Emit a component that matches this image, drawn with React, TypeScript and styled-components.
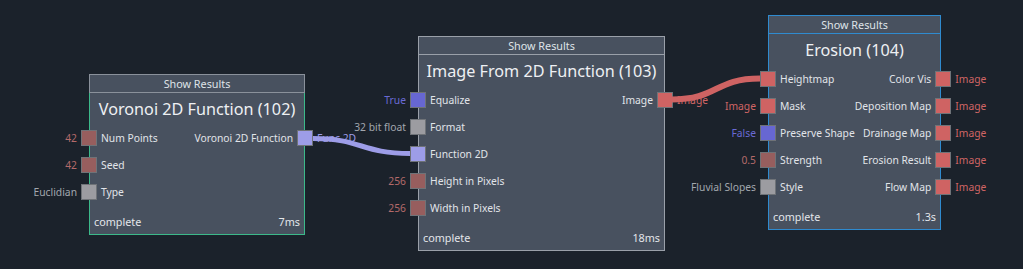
import React from 'react'
import styled, { createGlobalStyle } from 'styled-components'

type PortType = 'number' | 'enum' | 'bool' | 'func' | 'image'

const portColors: Record<PortType, string> = {
  number: '#975e5e',
  enum: '#9c9ca1',
  bool: '#6767d2',
  func: '#9d9de8',
  image: '#cf6363',
}

const valueColors: Record<PortType, string> = {
  number: '#b46a6a',
  enum: '#a2a7ae',
  bool: '#6a6ad4',
  func: '#9d9de8',
  image: '#d06565',
}

type Port = { label: string; type: PortType; value?: string }

type NodeData = {
  title: string
  x: number
  y: number
  w: number
  border: string
  headerBorder: string
  time: string
  inputs: Port[]
  outputs: Port[]
}

const nodes: NodeData[] = [
  {
    title: 'Voronoi 2D Function (102)',
    x: 89,
    y: 74,
    w: 216,
    border: '#3cb98a',
    headerBorder: '#8a919b',
    time: '7ms',
    inputs: [
      { label: 'Num Points', type: 'number', value: '42' },
      { label: 'Seed', type: 'number', value: '42' },
      { label: 'Type', type: 'enum', value: 'Euclidian' },
    ],
    outputs: [{ label: 'Voronoi 2D Function', type: 'func', value: 'Func 2D' }],
  },
  {
    title: 'Image From 2D Function (103)',
    x: 418,
    y: 36,
    w: 247,
    border: '#9aa0a9',
    headerBorder: '#9aa0a9',
    time: '18ms',
    inputs: [
      { label: 'Equalize', type: 'bool', value: 'True' },
      { label: 'Format', type: 'enum', value: '32 bit float' },
      { label: 'Function 2D', type: 'func' },
      { label: 'Height in Pixels', type: 'number', value: '256' },
      { label: 'Width in Pixels', type: 'number', value: '256' },
    ],
    outputs: [{ label: 'Image', type: 'image', value: 'Image' }],
  },
  {
    title: 'Erosion (104)',
    x: 768,
    y: 15,
    w: 173,
    border: '#2f8bd0',
    headerBorder: '#2f8bd0',
    time: '1.3s',
    inputs: [
      { label: 'Heightmap', type: 'image' },
      { label: 'Mask', type: 'image', value: 'Image' },
      { label: 'Preserve Shape', type: 'bool', value: 'False' },
      { label: 'Strength', type: 'number', value: '0.5' },
      { label: 'Style', type: 'enum', value: 'Fluvial Slopes' },
    ],
    outputs: [
      { label: 'Color Vis', type: 'image', value: 'Image' },
      { label: 'Deposition Map', type: 'image', value: 'Image' },
      { label: 'Drainage Map', type: 'image', value: 'Image' },
      { label: 'Erosion Result', type: 'image', value: 'Image' },
      { label: 'Flow Map', type: 'image', value: 'Image' },
    ],
  },
]

const wires = [
  { d: 'M313 138.5 C362 138.5 361 153.5 410 153.5', color: portColors.func, width: 5 },
  { d: 'M672 99.5 C718 99.5 714 78.5 760 78.5', color: portColors.image, width: 6 },
]

const GlobalStyle = createGlobalStyle`
  html, body {
    margin: 0;
    padding: 0;
    background: #1b222b;
  }
  body {
    font-family: 'Noto Sans', 'Open Sans', sans-serif;
    color: #e1e5ea;
  }
`

const Canvas = styled.div`
  position: relative;
  width: 1023px;
  height: 269px;
  overflow: hidden;
  background: #1b222b;
`

const NodeBox = styled.div<{ $x: number; $y: number; $w: number }>`
  position: absolute;
  left: ${(p) => p.$x}px;
  top: ${(p) => p.$y}px;
  width: ${(p) => p.$w}px;
  display: flex;
  flex-direction: column;
`

const Header = styled.div<{ $border: string }>`
  height: 17px;
  line-height: 17px;
  border: 1px solid ${(p) => p.$border};
  background: #48515f;
  text-align: center;
  font-size: 10.8px;
  color: #dfe3e8;
`

const Body = styled.div<{ $border: string }>`
  border: 1px solid ${(p) => p.$border};
  border-top: none;
  background: #48515f;
  padding: 4px 0 4px;
  display: flex;
  flex-direction: column;
`

const Title = styled.div`
  height: 24px;
  line-height: 24px;
  text-align: center;
  font-size: 16.2px;
  color: #eef0f3;
  white-space: nowrap;
  margin-bottom: 3px;
`

const Rows = styled.div`
  display: flex;
  justify-content: space-between;
  margin: 0 -9px;
`

const Column = styled.div<{ $right?: boolean }>`
  display: flex;
  flex-direction: column;
  align-items: ${(p) => (p.$right ? 'flex-end' : 'flex-start')};
`

const Row = styled.div<{ $right?: boolean }>`
  height: 27px;
  display: flex;
  align-items: center;
  gap: 4px;
  flex-direction: ${(p) => (p.$right ? 'row-reverse' : 'row')};
  font-size: 10.3px;
  color: #e1e4e9;
  white-space: nowrap;
`

const PortWrap = styled.div`
  position: relative;
  width: 16px;
  height: 16px;
`

const PortSquare = styled.div<{ $color: string }>`
  width: 16px;
  height: 16px;
  box-sizing: border-box;
  background: ${(p) => p.$color};
  border: 1px solid #6f7378;
`

const Value = styled.span<{ $color: string; $right?: boolean }>`
  position: absolute;
  top: 50%;
  transform: translateY(-50%);
  ${(p) => (p.$right ? 'left: calc(100% + 4px);' : 'right: calc(100% + 4px);')}
  color: ${(p) => p.$color};
  font-size: 10.3px;
  white-space: nowrap;
`

const Footer = styled.div`
  margin-top: 9px;
  height: 16px;
  line-height: 16px;
  padding: 0 4px;
  display: flex;
  justify-content: space-between;
  font-size: 10.8px;
  color: #e3e6ea;
`

const WireLayer = styled.svg`
  position: absolute;
  left: 0;
  top: 0;
  pointer-events: none;
`

const PortCell = ({ port, right }: { port: Port; right?: boolean }) => (
  <Row $right={right}>
    <PortWrap>
      <PortSquare $color={portColors[port.type]} />
      {port.value && (
        <Value $color={valueColors[port.type]} $right={right}>
          {port.value}
        </Value>
      )}
    </PortWrap>
    <span>{port.label}</span>
  </Row>
)

const GraphNode = ({ node }: { node: NodeData }) => (
  <NodeBox $x={node.x} $y={node.y} $w={node.w}>
    <Header $border={node.headerBorder}>Show Results</Header>
    <Body $border={node.border}>
      <Title>{node.title}</Title>
      <Rows>
        <Column>
          {node.inputs.map((p) => (
            <PortCell key={p.label} port={p} />
          ))}
        </Column>
        <Column $right>
          {node.outputs.map((p) => (
            <PortCell key={p.label} port={p} right />
          ))}
        </Column>
      </Rows>
      <Footer>
        <span>complete</span>
        <span>{node.time}</span>
      </Footer>
    </Body>
  </NodeBox>
)

const App = () => {
  return (
    <>
      <GlobalStyle />
      <Canvas>
        {nodes.map((n) => (
          <GraphNode key={n.title} node={n} />
        ))}
        <WireLayer width={1023} height={269}>
          {wires.map((w, i) => (
            <path key={i} d={w.d} fill="none" stroke={w.color} strokeWidth={w.width} />
          ))}
        </WireLayer>
      </Canvas>
    </>
  )
}

export default App
